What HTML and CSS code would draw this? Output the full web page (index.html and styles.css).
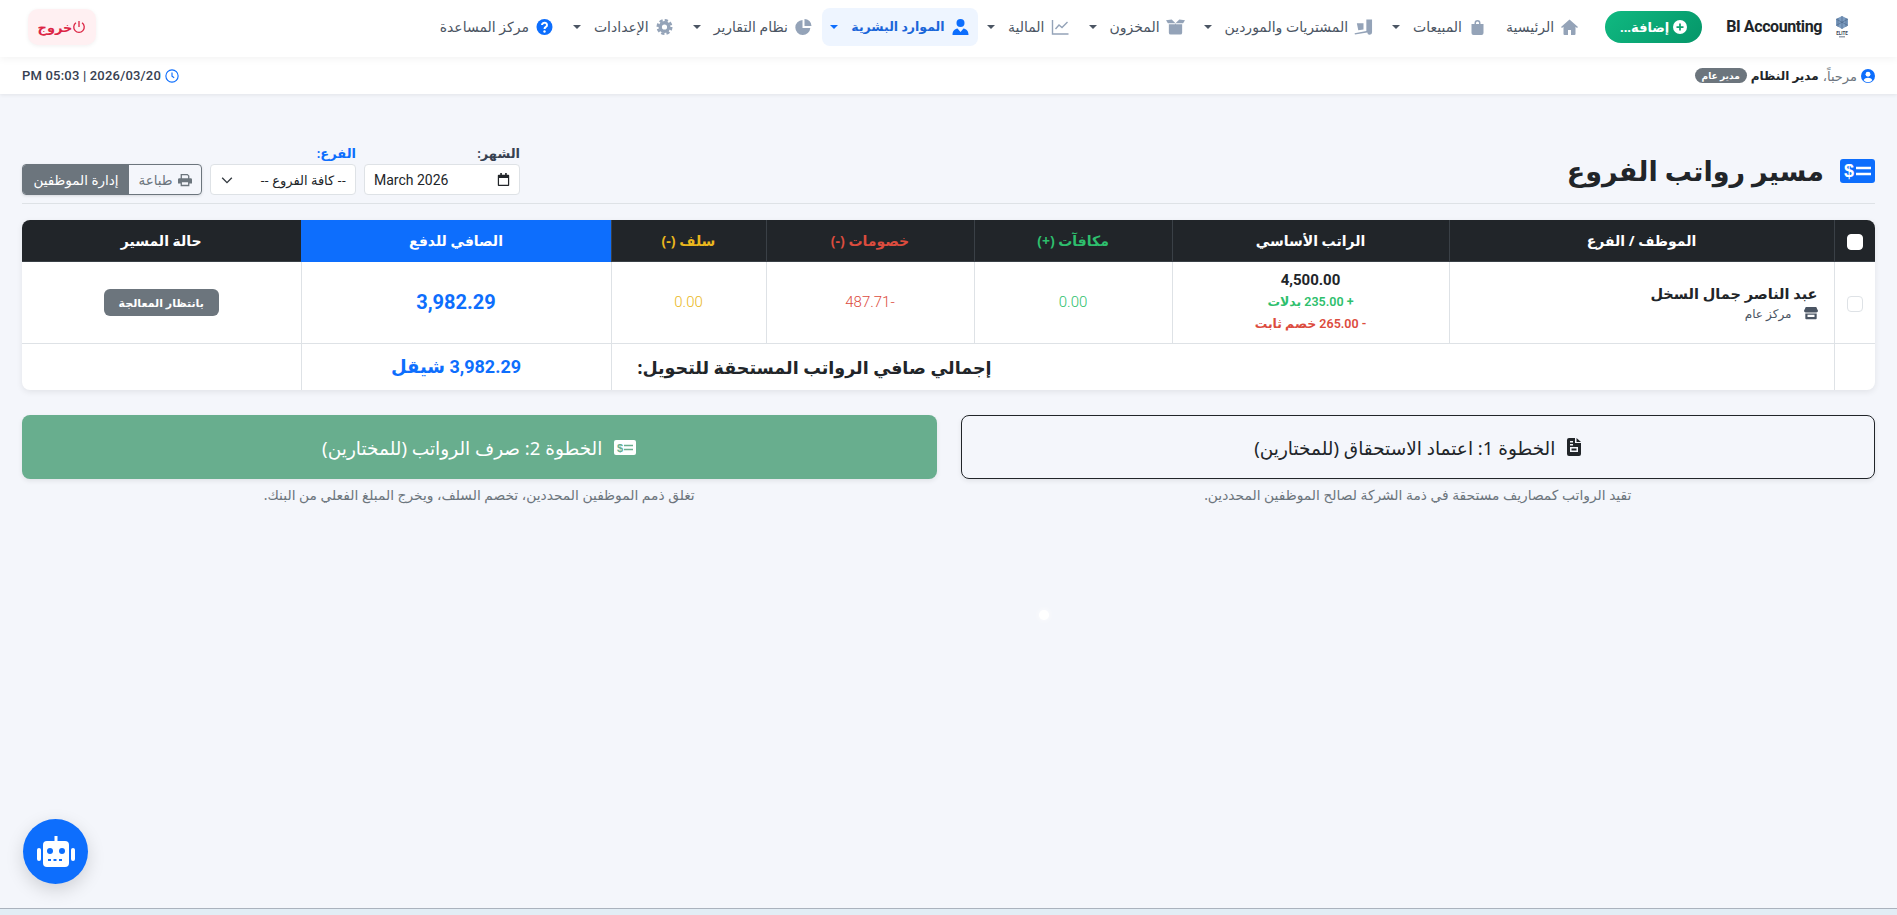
FILE: index.html
```html
<!DOCTYPE html>
<html lang="ar" dir="rtl">
  <head>
    <meta charset="UTF-8" />
    <title>مسير رواتب الفروع</title>
    <link rel="stylesheet" href="styles.css">
  </head>
  <body>
    <nav class="navbar">
      <a class="brand">
        <svg class="brand__logo" viewBox="0 0 16 22"><path fill="#7c9cc0" d="M8 0l6 3v6.500L8 13l-6-3.500V3z"/><path fill="none" stroke="#4a6488" stroke-width=".6" d="M2 3l12 6.500M14 3L2 9.500M8 0v13M4 2v9M12 2v9"/><text x="8" y="18.500" text-anchor="middle" class="brand__logo-text">ELITE</text><rect x="5" y="20" width="6" height="1.500" fill="#9aa3af"/></svg>
        <span>BI Accounting</span>
      </a>
      <a class="add-btn">
        <svg class="icon icon--sm" viewBox="0 0 16 16"><circle cx="8" cy="8" r="8" fill="#fff"/><path stroke="#0fa371" stroke-width="2" d="M8 4v8M4 8h8"/></svg>
        إضافة...
      </a>
      <a class="nav-item">
        <svg class="icon" viewBox="0 0 18 16"><path d="M9 .5L.5 8l1 1L3 7.800V15a1 1 0 001 1h3.500v-5h3v5H14a1 1 0 001-1V7.800L16.500 9l1-1z"/></svg>
        الرئيسية
      </a>
      <a class="nav-item nav-item--drop">
        <svg class="icon" viewBox="0 0 16 16"><path d="M5 5V4a3 3 0 016 0v1h3v9a2 2 0 01-2 2H4a2 2 0 01-2-2V5zm1.500 0h3V4a1.500 1.500 0 00-3 0z"/></svg>
        المبيعات
      </a>
      <a class="nav-item nav-item--drop">
        <svg class="icon" viewBox="0 0 20 16"><path d="M13 0h6v13.500a2.500 2.500 0 01-5 .3L1 16l-.4-1.500L13 12.300zM3 4h7v6.500L4.500 11.500z"/></svg>
        المشتريات والموردين
      </a>
      <a class="nav-item nav-item--drop">
        <svg class="icon" viewBox="0 0 20 16"><path d="M3 5h6.500l.5-1 .5 1H17v9a2 2 0 01-2 2H5a2 2 0 01-2-2zM0 1l6-1 4 4H2zM20 1l-6-1-4 4h8z"/></svg>
        المخزون
      </a>
      <a class="nav-item nav-item--drop">
        <svg class="icon icon--line" viewBox="0 0 18 16" stroke="currentColor" stroke-width="1.400"><path d="M1 1v14h16M4 10l3.500-4 3 2.500L16 3"/></svg>
        المالية
      </a>
      <a class="nav-item nav-item--drop nav-item--active">
        <svg class="icon" viewBox="0 0 16 16"><circle cx="8" cy="4" r="4"/><path d="M0 16c0-4 2-6 5-6.500L8 13l3-3.500c3 .5 5 2.500 5 6.500z"/></svg>
        الموارد البشرية
      </a>
      <a class="nav-item nav-item--drop">
        <svg class="icon" viewBox="0 0 16 16"><path d="M7 1a7.500 7.500 0 107.800 8H7zM9 0v7h7a7 7 0 00-7-7z"/></svg>
        نظام التقارير
      </a>
      <a class="nav-item nav-item--drop">
        <svg class="icon icon--line" viewBox="0 0 16 16" stroke="currentColor"><circle cx="8" cy="8" r="4.300" stroke-width="3.400"/><circle cx="8" cy="8" r="6.800" stroke-width="2.400" stroke-dasharray="3.300 2.040"/></svg>
        الإعدادات
      </a>
      <a class="nav-item">
        <svg class="icon icon--help" viewBox="0 0 16 16"><circle cx="8" cy="8" r="8"/><path fill="none" stroke="#fff" stroke-width="2" d="M5.500 6a2.500 2.300 0 114 1.800c-1 .7-1.500 1-1.500 2.200"/><circle cx="8" cy="12.500" r="1.200" fill="#fff"/></svg>
        مركز المساعدة
      </a>
      <a class="logout">
        <svg class="icon icon--sm icon--line" viewBox="0 0 16 16" stroke="currentColor" stroke-width="1.500"><path d="M8 1v7M4.500 3.200a6 6 0 107 0"/></svg>خروج
      </a>
    </nav>

    <div class="subbar">
      <div class="subbar__user">
        <svg class="icon icon--blue" viewBox="0 0 16 16"><circle cx="8" cy="8" r="8"/><circle cx="8" cy="6" r="2.800" fill="#fff"/><path fill="#fff" d="M3 12.800c1-2 3-2.800 5-2.800s4 .8 5 2.800a6.500 6.500 0 01-10 0z"/></svg>
        <span class="muted">مرحباً،</span>
        <strong class="subbar__name">مدير النظام</strong>
        <span class="pill">مدير عام</span>
      </div>
      <div class="subbar__clock">
        <svg class="icon icon--blue icon--line" viewBox="0 0 16 16" stroke="#0d6efd" stroke-width="1.300"><circle cx="8" cy="8" r="7"/><path d="M8 4v4.300l2.500 1.700"/></svg>
        <span dir="ltr">PM 05:03 | 2026/03/20</span>
      </div>
    </div>

    <main class="page">
      <header class="page__head">
        <h1 class="page__title">
          <svg class="page__icon" viewBox="0 0 35 24"><rect width="35" height="24" rx="3" fill="#0d6efd"/><text x="9" y="18" text-anchor="middle" class="page__icon-text">$</text><path stroke="#fff" stroke-width="2.600" d="M16 9h15M16 15h15"/></svg>
          مسير رواتب الفروع
        </h1>
        <div class="filters">
          <div class="field">
            <span class="field__label">الشهر:</span>
            <div class="field__input field__input--month" dir="ltr">
              <span>March 2026</span>
              <svg class="icon icon--sm icon--cal" viewBox="0 0 16 16"><path fill-rule="evenodd" d="M2 2h2V0h2v2h4V0h2v2h2a1 1 0 011 1v12a1 1 0 01-1 1H2a1 1 0 01-1-1V3a1 1 0 011-1zm.5 4v8.500h11V6z"/></svg>
            </div>
          </div>
          <div class="field">
            <span class="field__label field__label--blue">الفرع:</span>
            <div class="field__input field__input--select">
              <span>-- كافة الفروع --</span>
              <svg class="icon icon--sm icon--line" viewBox="0 0 16 16" stroke="#343a40" stroke-width="1.600"><path d="M2.500 5.500L8 11l5.500-5.500"/></svg>
            </div>
          </div>
          <div class="btn-group">
            <a class="btn-group__print">
              <svg class="icon icon--sm" viewBox="0 0 16 16"><path d="M3 1h8l2 2v3h1.500A1.500 1.500 0 0116 7.500V12h-3v3H3v-3H0V7.500A1.500 1.500 0 011.500 6H3zm1.500 1.500V6h7V3.500l-1-1zM4.500 10.500v3h7v-3z"/></svg>
              طباعة
            </a>
            <a class="btn-group__staff">إدارة الموظفين</a>
          </div>
        </div>
      </header>

      <div class="payroll">
        <table class="payroll__table">
          <colgroup>
            <col class="col-check" /><col class="col-emp" /><col class="col-basic" /><col class="col-bonus" />
            <col class="col-ded" /><col class="col-adv" /><col class="col-net" /><col class="col-status" />
          </colgroup>
          <thead>
            <tr>
              <th><span class="checkbox checkbox--head"></span></th>
              <th>الموظف / الفرع</th>
              <th>الراتب الأساسي</th>
              <th class="c-green">مكافآت (+)</th>
              <th class="c-red">خصومات (-)</th>
              <th class="c-yellow">سلف (-)</th>
              <th class="th-net">الصافي للدفع</th>
              <th>حالة المسير</th>
            </tr>
          </thead>
          <tbody>
            <tr class="row-main">
              <td><span class="checkbox"></span></td>
              <td class="emp">
                <div class="emp__name">عبد الناصر جمال السخل</div>
                <div class="emp__branch">
                  <svg class="icon icon--sm" viewBox="0 0 16 14"><path d="M2 0h12l2 4.500a2 2 0 01-2 2H2a2 2 0 01-2-2zM1.500 7.500h13V13a1 1 0 01-1 1h-11a1 1 0 01-1-1zM4 9v2.500h8V9z" fill-rule="evenodd"/></svg>
                  <span>مركز عام</span>
                </div>
              </td>
              <td class="basic">
                <div class="basic__amount">4,500.00</div>
                <div class="basic__plus">+ 235.00 بدلات</div>
                <div class="basic__minus">- 265.00 خصم ثابت</div>
              </td>
              <td class="c-green amount">0.00</td>
              <td class="c-red amount">-487.71</td>
              <td class="c-yellow amount">0.00</td>
              <td class="net">3,982.29</td>
              <td><span class="status">بانتظار المعالجة</span></td>
            </tr>
            <tr class="row-total">
              <td></td>
              <td colspan="5" class="total__label">إجمالي صافي الرواتب المستحقة للتحويل:</td>
              <td class="total__value">3,982.29 شيقل</td>
              <td></td>
            </tr>
          </tbody>
        </table>
      </div>

      <div class="steps">
        <div class="step">
          <a class="step__btn step__btn--outline">
            <svg class="step__icon" viewBox="0 0 14 18"><path fill-rule="evenodd" d="M2 0h6v5h6v11a2 2 0 01-2 2H2a2 2 0 01-2-2V2a2 2 0 012-2zm7.500 0L14 4H9.500zM3 9v5h8V9zm1.500 1.500h5v2h-5zM3 3v1.500h3V3zm0 3v1.500h3V6z"/></svg>
            الخطوة 1: اعتماد الاستحقاق (للمختارين)
          </a>
          <p class="step__note">تقيد الرواتب كمصاريف مستحقة في ذمة الشركة لصالح الموظفين المحددين.</p>
        </div>
        <div class="step">
          <a class="step__btn step__btn--green">
            <svg class="step__icon step__icon--wide" viewBox="0 0 22 15"><rect width="22" height="15" rx="2" fill="#fff"/><text x="6" y="12" text-anchor="middle" class="step__icon-text">$</text><path stroke="#68ae8e" stroke-width="1.500" d="M10 5.500h9M10 9.500h9"/></svg>
            الخطوة 2: صرف الرواتب (للمختارين)
          </a>
          <p class="step__note">تغلق ذمم الموظفين المحددين، تخصم السلف، ويخرج المبلغ الفعلي من البنك.</p>
        </div>
      </div>
    </main>

    <div class="strip"></div>

    <span class="dot"></span>
    <a class="bot">
      <svg viewBox="0 0 40 32" class="bot__icon"><rect x="18.500" y="0" width="3" height="6" fill="#fff"/><rect x="7" y="5" width="26" height="26" rx="4" fill="#fff"/><rect x="1" y="12" width="4" height="13" rx="2" fill="#fff"/><rect x="35" y="12" width="4" height="13" rx="2" fill="#fff"/><circle cx="14" cy="15" r="3" fill="#0d6efd"/><circle cx="26" cy="15" r="3" fill="#0d6efd"/><path stroke="#0d6efd" stroke-width="2" stroke-dasharray="3 2.500" d="M12 24h16"/></svg>
    </a>
  </body>
</html>
```

FILE: styles.css
```css
:root {
  --color-blue: #0d6efd;
  --color-dark: #212529;
  --color-grey: #6c757d;
  --color-line: #dee2e6;
  --color-nav: #4b5563;
  --color-nav-icon: #94a3b8;
  --color-green: #2ebf6d;
  --color-red: #dc4c3e;
  --color-yellow: #eab71e;
  --color-bg: #f4f6fb;
  --font-main: "Noto Sans", "DejaVu Sans", sans-serif;
  --font-digits: Roboto, "Noto Sans", "DejaVu Sans", sans-serif;
}

* {
  box-sizing: border-box;
  margin: 0;
  padding: 0;
}

html,
body {
  height: 100%;
}

body {
  display: flex;
  flex-direction: column;
  overflow: hidden;
  background-color: var(--color-bg);
  color: var(--color-dark);
  font-family: var(--font-main);
  font-size: 14px;
}

.icon {
  width: 19px;
  height: 16px;
  fill: currentColor;
  flex-shrink: 0;
}

.icon--sm {
  width: 14px;
  height: 14px;
}

.icon--blue {
  width: 14px;
  height: 14px;
  color: var(--color-blue);
}

.icon--line {
  fill: none;
}

/* top bar */
.navbar {
  display: flex;
  align-items: center;
  height: 57px;
  padding: 0 47px 4px 28px;
  background-color: #fff;
  box-shadow: 0 2px 8px rgba(0, 0, 0, 0.05);
  position: relative;
  z-index: 2;
}

.brand {
  display: flex;
  align-items: center;
  gap: 12px;
  margin-left: 24px;
  font-family: Roboto, sans-serif;
  font-size: 16px;
  font-weight: 700;
  letter-spacing: -0.4px;
  white-space: nowrap;
}

.brand__logo {
  width: 16px;
  height: 22px;
}

.brand__logo-text {
  fill: #3a4658;
  font-family: Roboto, sans-serif;
  font-size: 4.500px;
  font-weight: 700;
  letter-spacing: 0;
}

.add-btn {
  display: flex;
  align-items: center;
  justify-content: center;
  gap: 4px;
  width: 97px;
  height: 32px;
  margin-left: 16.500px;
  border-radius: 16px;
  background: linear-gradient(135deg, #10b981, #059669);
  color: #fff;
  font-size: 13px;
  font-weight: 700;
  white-space: nowrap;
}

.nav-item {
  display: flex;
  align-items: center;
  gap: 6px;
  height: 38px;
  padding: 0 9.500px;
  border-radius: 8px;
  color: var(--color-nav);
  font-size: 14px;
  white-space: nowrap;
}

.nav-item .icon {
  color: var(--color-nav-icon);
}

.nav-item--drop::after {
  content: "";
  margin-right: 7px;
  border-top: 4px solid var(--color-nav);
  border-left: 4px solid transparent;
  border-right: 4px solid transparent;
}

.nav-item--active {
  padding: 0 8px;
  background-color: #eef5ff;
  color: #1a66d9;
  font-size: 12.500px;
  font-weight: 700;
}

.nav-item--active .icon {
  color: var(--color-blue);
}

.nav-item--active::after {
  border-top-color: var(--color-blue);
}

.nav-item .icon--help {
  color: var(--color-blue);
}

.logout {
  display: flex;
  align-items: center;
  justify-content: center;
  width: 68px;
  height: 36px;
  margin-right: auto;
  border-radius: 10px;
  background-color: #fff0f2;
  box-shadow: 0 1px 4px rgba(0, 0, 0, 0.06);
  color: #dc2645;
  font-size: 13px;
  font-weight: 700;
}

/* second bar */
.subbar {
  display: flex;
  align-items: center;
  justify-content: space-between;
  height: 37px;
  padding: 0 22px;
  background-color: #fff;
  box-shadow: 0 1px 4px rgba(0, 0, 0, 0.08);
  font-size: 13px;
}

.subbar__user,
.subbar__clock {
  display: flex;
  align-items: center;
  gap: 4px;
}

.subbar__name {
  font-size: 12px;
}

.subbar__clock {
  color: #374151;
  font-family: Roboto, sans-serif;
  font-weight: 500;
  letter-spacing: 0.2px;
}

.muted {
  color: var(--color-grey);
}

.pill {
  padding: 1px 7px;
  border-radius: 9px;
  background-color: var(--color-grey);
  color: #fff;
  font-size: 9px;
  font-weight: 700;
}

/* page */
.page {
  flex: 1;
  padding: 48px 22px 0;
}

.page__head {
  display: flex;
  align-items: flex-end;
  justify-content: space-between;
  height: 62px;
  padding-bottom: 8px;
  border-bottom: 1px solid var(--color-line);
}

.page__title {
  display: flex;
  align-items: center;
  gap: 16px;
  padding-bottom: 1px;
  font-size: 27px;
  font-weight: 700;
  line-height: 46px;
}

.page__icon {
  width: 35px;
  height: 24px;
}

.page__icon-text {
  fill: #fff;
  font-family: "Liberation Sans", sans-serif;
  font-size: 18px;
  font-weight: 700;
}

.filters {
  display: flex;
  align-items: flex-end;
  gap: 8px;
}

.field {
  display: flex;
  flex-direction: column;
  gap: 3px;
}

.field__label {
  color: #374151;
  font-size: 13px;
  font-weight: 600;
  line-height: 15px;
}

.field__label--blue {
  color: var(--color-blue);
}

.field__input {
  display: flex;
  align-items: center;
  justify-content: space-between;
  height: 31px;
  padding: 0 9px;
  border: 1px solid var(--color-line);
  border-radius: 4px;
  background-color: #fff;
  color: var(--color-dark);
  font-size: 13px;
}

.field__input--month {
  width: 156px;
  font-family: Roboto, sans-serif;
  font-size: 14px;
}

.icon--cal {
  width: 13px;
  height: 13px;
}

.field__input--select {
  width: 146px;
}

.btn-group {
  display: flex;
  width: 180px;
  height: 31px;
  border: 1px solid var(--color-grey);
  border-radius: 4px;
  overflow: hidden;
  box-shadow: 0 1px 3px rgba(0, 0, 0, 0.12);
  font-size: 13.500px;
}

.btn-group__print {
  display: flex;
  align-items: center;
  justify-content: center;
  gap: 5px;
  width: 72px;
  color: var(--color-grey);
}

.btn-group__staff {
  display: flex;
  align-items: center;
  justify-content: center;
  flex: 1;
  background-color: var(--color-grey);
  color: #fff;
  white-space: nowrap;
}

/* table */
.payroll {
  margin-top: 16px;
  border-radius: 8px;
  overflow: hidden;
  background-color: #fff;
  box-shadow: 0 2px 6px rgba(0, 0, 0, 0.08);
}

.payroll__table {
  width: 100%;
  table-layout: fixed;
  border-collapse: collapse;
  text-align: center;
}

.col-check { width: 41px; }
.col-emp { width: 385px; }
.col-basic { width: 277px; }
.col-bonus { width: 198px; }
.col-ded { width: 208px; }
.col-adv { width: 155px; }
.col-net { width: 310px; }
.col-status { width: 279px; }

th {
  height: 41px;
  background-color: var(--color-dark);
  border: 1px solid #3a4046;
  border-top: 0;
  color: #fff;
  font-size: 14px;
  font-weight: 700;
}

th:first-child,
td:first-child {
  border-right: 0;
}

th:last-child,
td:last-child {
  border-left: 0;
}

th.th-net {
  background-color: var(--color-blue);
  border-color: var(--color-blue);
}

th.c-green,
.c-green { color: var(--color-green); }
th.c-red,
.c-red { color: var(--color-red); }
th.c-yellow,
.c-yellow { color: var(--color-yellow); }

td {
  border: 1px solid var(--color-line);
  vertical-align: middle;
}

.row-main td {
  height: 82px;
}

.row-total td {
  height: 47px;
  border-bottom: 0;
}

.checkbox {
  display: inline-block;
  width: 16px;
  height: 16px;
  border: 1px solid var(--color-line);
  border-radius: 4px;
  background-color: #fff;
  vertical-align: middle;
}

.checkbox--head {
  border-color: #fff;
}

.emp {
  padding: 0 16px;
  text-align: right;
}

.emp__name {
  font-size: 14.500px;
  font-weight: 600;
}

.emp__branch {
  display: flex;
  align-items: center;
  gap: 12px;
  margin-top: 2px;
  color: #4b5563;
  font-size: 12px;
  letter-spacing: 3px;
}

.basic__amount,
.basic__plus,
.basic__minus {
  font-family: var(--font-digits);
  line-height: 22px;
}

.basic__amount {
  font-size: 15px;
  font-weight: 700;
}

.basic__plus,
.basic__minus {
  font-size: 12.500px;
  font-weight: 600;
}

.basic__plus { color: var(--color-green); }
.basic__minus { color: var(--color-red); }

.amount {
  font-family: Roboto, sans-serif;
  font-size: 15px;
  font-weight: 300;
}

.net {
  color: var(--color-blue);
  font-family: Roboto, sans-serif;
  font-size: 20px;
  font-weight: 700;
}

.status {
  display: inline-block;
  padding: 6px 15px;
  border-radius: 6px;
  background-color: var(--color-grey);
  color: #fff;
  font-size: 11px;
  font-weight: 700;
}

.total__label {
  padding: 0 0 0 26px;
  text-align: left;
  font-size: 17.500px;
  font-weight: 700;
}

.total__value {
  color: var(--color-blue);
  font-family: var(--font-digits);
  font-size: 18px;
  font-weight: 700;
}

/* step buttons */
.steps {
  display: grid;
  grid-template-columns: 1fr 1fr;
  gap: 24px;
  margin-top: 25px;
}

.step__btn {
  display: flex;
  align-items: center;
  justify-content: center;
  gap: 12px;
  height: 64px;
  border-radius: 8px;
  box-shadow: 0 2px 5px rgba(0, 0, 0, 0.08);
  font-size: 18.500px;
}

.step__btn--outline {
  border: 1px solid var(--color-dark);
}

.step__btn--green {
  background-color: #68ae8e;
  color: #fff;
}

.step__icon {
  width: 14px;
  height: 18px;
  fill: var(--color-dark);
}

.step__icon--wide {
  width: 22px;
  height: 15px;
}

.step__icon-text {
  fill: #68ae8e;
  font-family: "Liberation Sans", sans-serif;
  font-size: 11px;
  font-weight: 700;
}

.step__note {
  margin-top: 6px;
  color: var(--color-grey);
  font-size: 13.800px;
  text-align: center;
}

/* bottom strip */
.strip {
  height: 7px;
  border-top: 1px solid #aab2bd;
  background-color: #e2edf5;
}

/* overlays */
.dot {
  position: fixed;
  left: 1039px;
  top: 610px;
  width: 10px;
  height: 10px;
  border-radius: 50%;
  background-color: #fff;
  box-shadow: 0 0 6px rgba(255, 255, 255, 0.9);
}

.bot {
  position: fixed;
  left: 23px;
  bottom: 31px;
  display: flex;
  align-items: center;
  justify-content: center;
  width: 65px;
  height: 65px;
  border-radius: 50%;
  background-color: var(--color-blue);
  box-shadow: 0 6px 18px rgba(0, 0, 0, 0.15);
}

.bot__icon {
  width: 40px;
  height: 32px;
}
```
